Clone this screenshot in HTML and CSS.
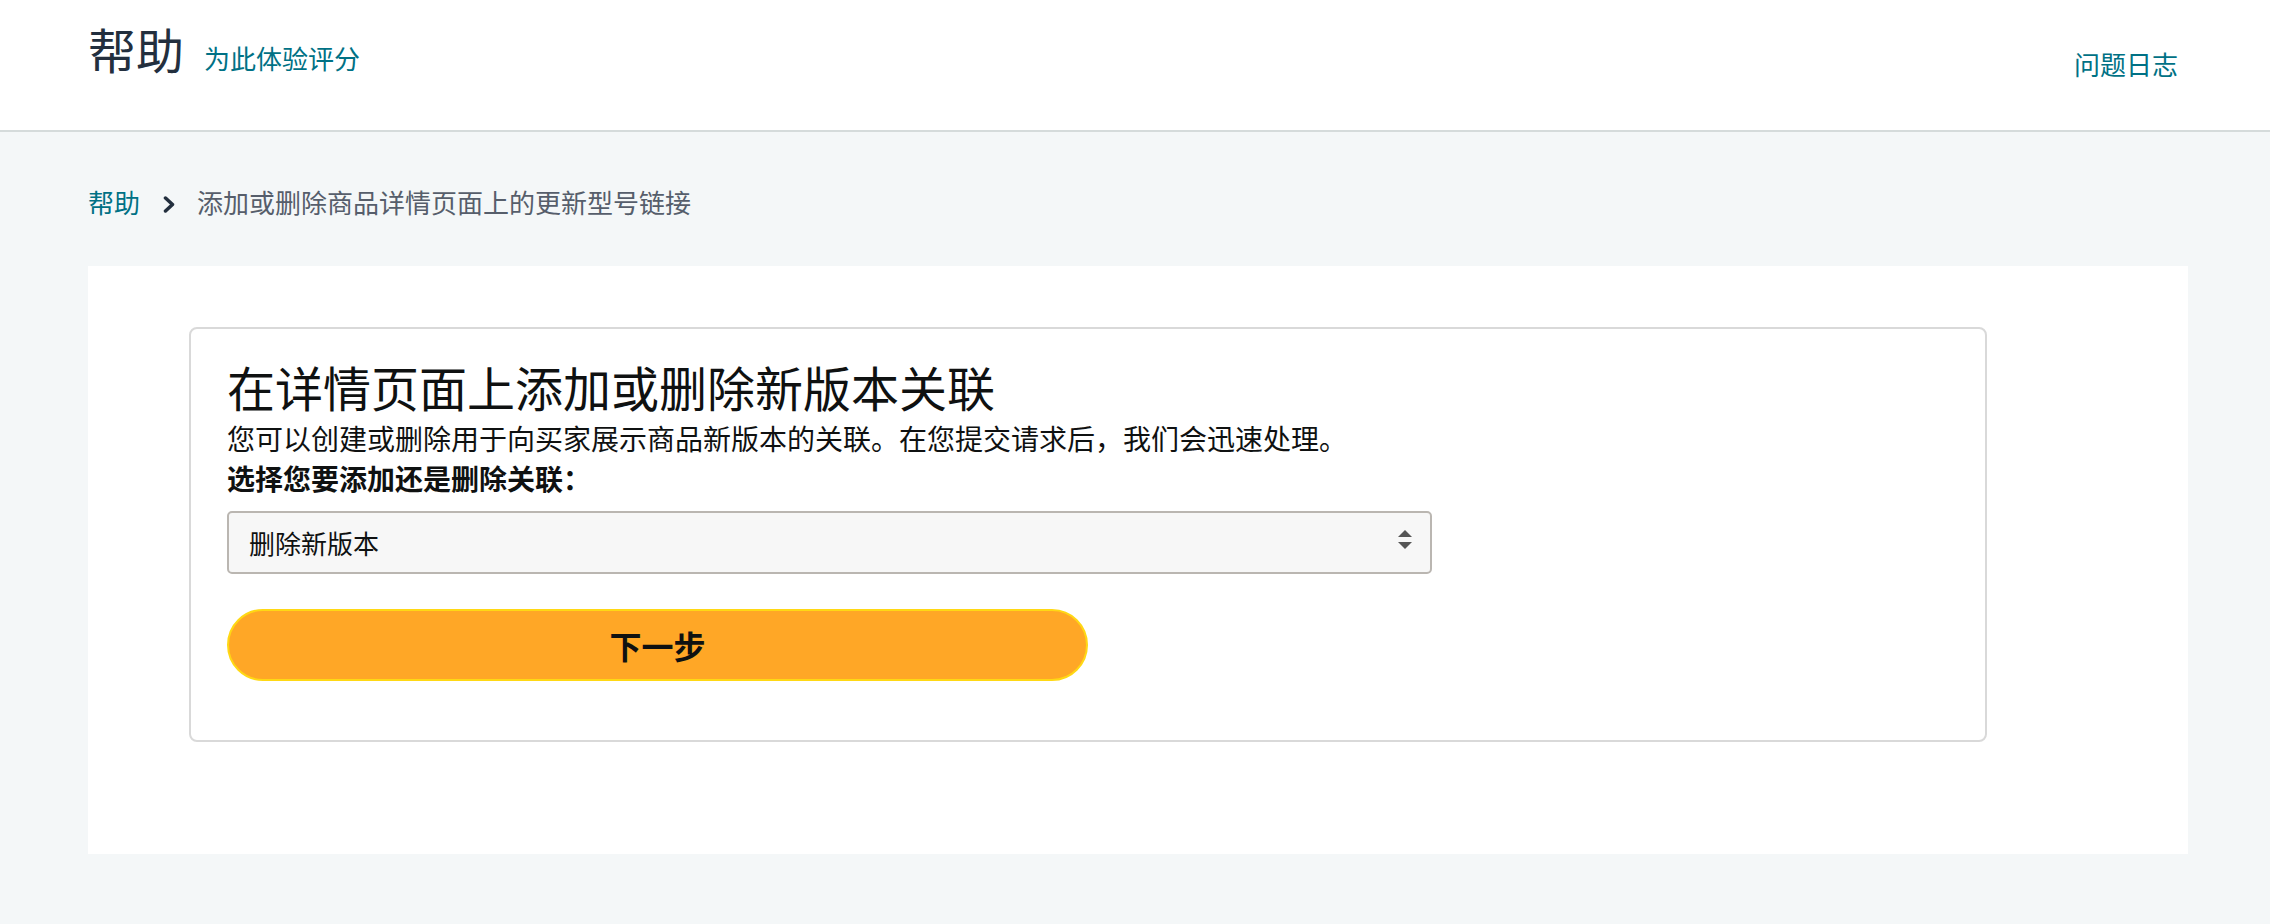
FILE: index.html
```html
<!DOCTYPE html>
<html lang="zh-CN">
<head>
    <meta charset="UTF-8">
    <meta name="viewport" content="width=device-width, initial-scale=1.0">
    <title>帮助 - 添加或删除新版本关联</title>
    <link rel="stylesheet" href="styles.css">
</head>
<body>
    <header class="site-header">
        <div class="header-left">
            <h1 class="header-title">帮助</h1>
            <a class="rate-link" href="#">为此体验评分</a>
        </div>
        <a class="log-link" href="#">问题日志</a>
    </header>

    <main class="page">
        <nav class="breadcrumb">
            <a href="#">帮助</a>
            <svg class="crumb-sep" viewBox="0 0 12 17" aria-hidden="true">
                <polyline points="2.5,2 9.5,8.5 2.5,15" fill="none" stroke="#232f3e" stroke-width="3.5" stroke-linecap="round" stroke-linejoin="round"/>
            </svg>
            <span class="crumb-current">添加或删除商品详情页面上的更新型号链接</span>
        </nav>

        <section class="panel">
            <div class="card">
                <h2>在详情页面上添加或删除新版本关联</h2>
                <p>您可以创建或删除用于向买家展示商品新版本的关联。在您提交请求后，我们会迅速处理。</p>
                <label for="assoc-action">选择您要添加还是删除关联：</label>
                <div class="select-wrap">
                    <select id="assoc-action" name="assocAction">
                        <option value="add">添加新版本</option>
                        <option value="remove" selected>删除新版本</option>
                    </select>
                    <!-- up/down arrows for the dropdown -->
                    <svg class="select-arrows" viewBox="0 0 14 19" aria-hidden="true">
                        <polygon points="0,7 7,0 14,7" fill="#555"/>
                        <polygon points="0,12 14,12 7,19" fill="#555"/>
                    </svg>
                </div>
                <button type="button">下一步</button>
            </div>
        </section>
    </main>
</body>
</html>
```

FILE: styles.css
```css
* {
    box-sizing: border-box;
}

body {
    margin: 0;
    font-family: "Noto Sans CJK SC", "Noto Sans", sans-serif;
    background-color: #f4f7f8;
    color: #0f1111;
}

a {
    color: #007185;
    text-decoration: none;
}

/* Top bar */
.site-header {
    display: flex;
    justify-content: space-between;
    align-items: flex-start;
    height: 132px;
    padding: 0 92px 0 88px;
    background-color: #fff;
    border-bottom: 2px solid #d5dbdb;
}

.header-left {
    display: flex;
    align-items: baseline;
    padding-top: 20px;
}

.header-title {
    margin: 0 20px 0 0;
    font-size: 48px;
    font-weight: normal;
    line-height: 56px;
    color: #232f3e;
}

.rate-link {
    font-size: 26px;
    line-height: 36px;
}

.log-link {
    margin-top: 46px;
    font-size: 26px;
    line-height: 36px;
}

/* Main area */
.page {
    padding: 52px 82px 70px 88px;
}

.breadcrumb {
    display: flex;
    align-items: center;
    height: 36px;
    margin-bottom: 46px;
    font-size: 26px;
    line-height: 36px;
}

.crumb-sep {
    width: 12px;
    height: 17px;
    margin: 4px 22px 0 23px;
}

.crumb-current {
    color: #565e6b;
}

.panel {
    background-color: #fff;
    padding: 61px 201px 112px 101px;
}

.card {
    border: 2px solid #d9d9d9;
    border-radius: 8px;
    padding: 25px 36px 59px;
}

.card h2 {
    margin: 0;
    font-size: 48px;
    font-weight: normal;
    line-height: 64px;
}

.card p {
    margin: 0;
    font-size: 28px;
    line-height: 40px;
}

.card label {
    display: block;
    font-size: 28px;
    font-weight: bold;
    line-height: 40px;
}

.select-wrap {
    position: relative;
    width: 70%;
    margin-top: 13px;
}

.select-wrap select {
    width: 100%;
    height: 63px;
    padding: 0 60px 0 20px;
    appearance: none;
    -webkit-appearance: none;
    border: 2px solid #bab6b1;
    border-radius: 5px;
    background-color: #f7f7f7;
    font-family: inherit;
    font-size: 26px;
    color: #0f1111;
}

.select-arrows {
    position: absolute;
    right: 20px;
    top: 19px;
    width: 14px;
    height: 19px;
    pointer-events: none;
}

.card button {
    display: block;
    width: 50%;
    height: 72px;
    margin-top: 35px;
    border: 2px solid #ffd814;
    border-radius: 36px;
    background-color: #ffa726;
    font-family: inherit;
    font-size: 32px;
    font-weight: bold;
    color: #0f1111;
    cursor: pointer;
}

.card button:hover {
    background-color: #fa9a10;
}
```
